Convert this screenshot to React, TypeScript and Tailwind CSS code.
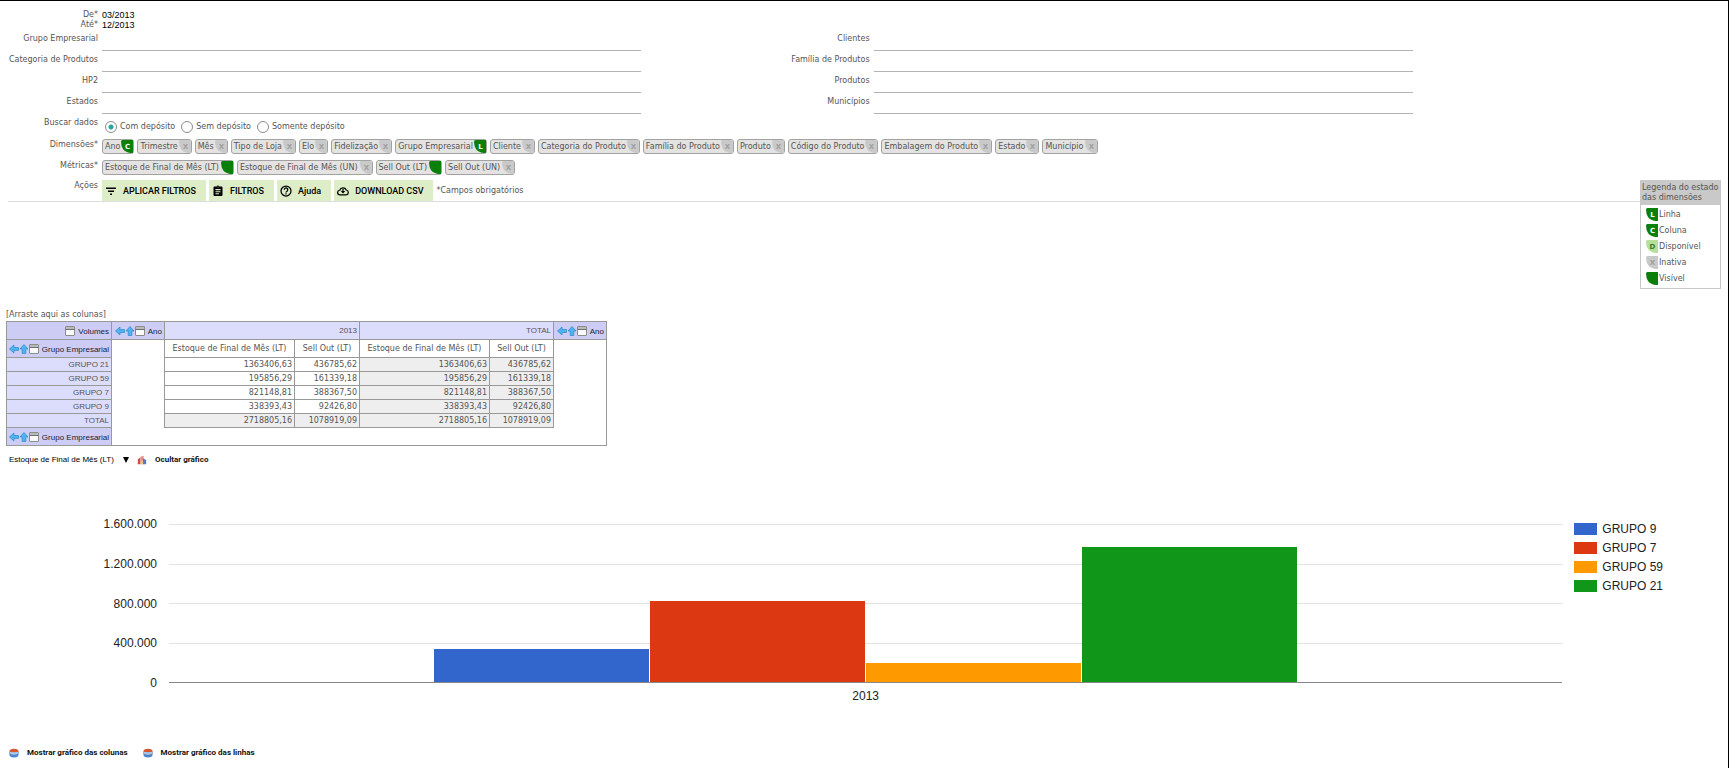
import React, { useState } from 'react';

type TagState = 'linha' | 'coluna' | 'disponivel' | 'inativa' | 'visivel';

interface Tag {
  label: string;
  state: TagState;
}

const DIMENSIONS: Tag[] = [
  { label: 'Ano', state: 'coluna' },
  { label: 'Trimestre', state: 'inativa' },
  { label: 'Mês', state: 'inativa' },
  { label: 'Tipo de Loja', state: 'inativa' },
  { label: 'Elo', state: 'inativa' },
  { label: 'Fidelização', state: 'inativa' },
  { label: 'Grupo Empresarial', state: 'linha' },
  { label: 'Cliente', state: 'inativa' },
  { label: 'Categoria do Produto', state: 'inativa' },
  { label: 'Família do Produto', state: 'inativa' },
  { label: 'Produto', state: 'inativa' },
  { label: 'Código do Produto', state: 'inativa' },
  { label: 'Embalagem do Produto', state: 'inativa' },
  { label: 'Estado', state: 'inativa' },
  { label: 'Município', state: 'inativa' },
];

const METRICS: Tag[] = [
  { label: 'Estoque de Final de Mês (LT)', state: 'visivel' },
  { label: 'Estoque de Final de Mês (UN)', state: 'inativa' },
  { label: 'Sell Out (LT)', state: 'visivel' },
  { label: 'Sell Out (UN)', state: 'inativa' },
];

const LEGEND: Tag[] = [
  { label: 'Linha', state: 'linha' },
  { label: 'Coluna', state: 'coluna' },
  { label: 'Disponível', state: 'disponivel' },
  { label: 'Inativa', state: 'inativa' },
  { label: 'Visível', state: 'visivel' },
];

const FIELDS = [
  ['Grupo Empresarial', 'Clientes'],
  ['Categoria de Produtos', 'Família de Produtos'],
  ['HP2', 'Produtos'],
  ['Estados', 'Municípios'],
];

const DEPOSITS = ['Com depósito', 'Sem depósito', 'Somente depósito'];

const ROWS = [
  { name: 'GRUPO 21', stock: '1363406,63', sell: '436785,62' },
  { name: 'GRUPO 59', stock: '195856,29', sell: '161339,18' },
  { name: 'GRUPO 7', stock: '821148,81', sell: '388367,50' },
  { name: 'GRUPO 9', stock: '338393,43', sell: '92426,80' },
  { name: 'TOTAL', stock: '2718805,16', sell: '1078919,09' },
];

const CHART_MAX = 1600000;
const TICKS = ['1.600.000', '1.200.000', '800.000', '400.000', '0'];
const SERIES = [
  { name: 'GRUPO 9', value: 338393.43, color: 'bg-[#3366cc]' },
  { name: 'GRUPO 7', value: 821148.81, color: 'bg-[#dc3912]' },
  { name: 'GRUPO 59', value: 195856.29, color: 'bg-[#ff9900]' },
  { name: 'GRUPO 21', value: 1363406.63, color: 'bg-[#109618]' },
];

const STATE_STYLE: Record<TagState, { bg: string; fg: string; letter: string }> = {
  linha: { bg: 'fill-[#0a800a]', fg: 'fill-white', letter: 'L' },
  coluna: { bg: 'fill-[#0a800a]', fg: 'fill-white', letter: 'C' },
  disponivel: { bg: 'fill-[#b4e09a]', fg: 'fill-[#3c7a2c]', letter: 'D' },
  inativa: { bg: 'fill-[#c9c9c9]', fg: 'fill-[#a0a0a0]', letter: 'X' },
  visivel: { bg: 'fill-[#0a800a]', fg: 'fill-white', letter: '' },
};

const StateIcon: React.FC<{ state: TagState }> = ({ state }) => {
  const s = STATE_STYLE[state];
  return (
    <svg viewBox="0 0 12 13" className="h-[13px] w-3 shrink-0">
      <path d="M0 1.500 Q0 0 1.500 0 H12 V13 H9.500 Q4 12 2 9 Q0 6 0 1.500 Z" className={s.bg} />
      <text x="6.5" y="8.5" textAnchor="middle" className={`${s.fg} font-['DejaVu_Sans'] text-[7px] font-bold`}>
        {s.letter}
      </text>
    </svg>
  );
};

const TagList: React.FC<{ tags: Tag[]; gap?: string }> = ({ tags, gap = 'gap-px' }) => (
  <div className="flex flex-wrap gap-[3px] pt-[2px]">
    {tags.map((tag) => (
      <button
        key={tag.label}
        type="button"
        className={`flex h-[15px] items-center rounded-[3px] border border-[#a2a2a2] bg-[#e4e3e1] pl-[2px] whitespace-nowrap ${gap}`}
      >
        {tag.label}
        <StateIcon state={tag.state} />
      </button>
    ))}
  </div>
);

const ArrowLeft = () => (
  <svg viewBox="0 0 10 10" className="size-[10px]">
    <path d="M0.5 5 L5 1 V3.5 H9.5 V6.5 H5 V9 Z" fill="#4fb4ee" stroke="#2b86cf" strokeWidth="0.7" />
  </svg>
);

const ArrowUp = () => (
  <svg viewBox="0 0 10 10" className="size-[10px]">
    <path d="M5 0.5 L9 5 H6.8 V9.5 H3.2 V5 H1 Z" fill="#4fb4ee" stroke="#2b86cf" strokeWidth="0.7" />
  </svg>
);

const WindowIcon = () => (
  <svg viewBox="0 0 10 10" className="size-[10px]">
    <rect x="0.5" y="0.5" width="9" height="9" rx="0.5" fill="#fafafa" stroke="#8b8b8b" />
    <rect x="1" y="1" width="8" height="2" fill="#b9b9b9" />
    <path d="M0.5 3.5 H9.5" stroke="#6f6f6f" />
  </svg>
);

const AxisHead: React.FC<{ label: string; arrows?: boolean }> = ({ label, arrows = true }) => (
  <span className="flex items-center justify-end font-['Liberation_Sans'] font-normal whitespace-nowrap text-[#223]">
    {arrows && <ArrowLeft />}
    {arrows && <ArrowUp />}
    <WindowIcon />
    <span className="pt-[3px] pl-[3px]">{label}</span>
  </span>
);

const FilterIcon = () => (
  <svg viewBox="0 0 24 24" className="size-3">
    <path d="M2 5h20v3H2zM6 11h12v3H6zM10 17h4v3h-4z" />
  </svg>
);

const ClipboardIcon = () => (
  <svg viewBox="0 0 24 24" className="size-3">
    <path d="M19 3h-4.2a3 3 0 0 0-5.6 0H5a2 2 0 0 0-2 2v15a2 2 0 0 0 2 2h14a2 2 0 0 0 2-2V5a2 2 0 0 0-2-2zm-7 0a1 1 0 1 1 0 2 1 1 0 0 1 0-2zM7 8h10v2.500H7zm0 4.500h10v2H7zM7 16.500h7v2H7z" fillRule="evenodd" />
  </svg>
);

const HelpIcon = () => (
  <svg viewBox="0 0 24 24" className="size-3" fill="none" stroke="currentColor" strokeWidth="2.500">
    <circle cx="12" cy="12" r="10" />
    <path d="M8.500 9.500a3.500 3.500 0 1 1 5.500 2.800c-1.400 1-2 1.500-2 2.700M12 16.500v2.500" />
  </svg>
);

const CloudIcon = () => (
  <svg viewBox="0 0 24 24" className="size-3" fill="none" stroke="currentColor" strokeWidth="2.500">
    <path d="M6 19.500a4.500 4.500 0 0 1-.5-9 7 7 0 0 1 13-.5 4.800 4.800 0 0 1 0 9.500z" />
    <path d="M12 8v7" />
    <path d="M7.500 12h9L12 17z" fill="currentColor" stroke="none" />
  </svg>
);

const ActionButton: React.FC<{ icon: React.ReactNode; children: React.ReactNode }> = ({ icon, children }) => (
  <button
    type="button"
    className="flex h-[21px] items-center gap-[6px] bg-[#dcedc8] pr-[10px] pl-[3px] font-['Roboto'] text-[9px] font-medium text-black"
  >
    {icon}
    {children}
  </button>
);

const BarsIcon = () => (
  <svg viewBox="0 0 12 12" className="size-[10px]">
    <path d="M1 11 V5 L4 3 V11 Z" fill="#c9504a" />
    <path d="M4 11 V2 L8 1 V11 Z" fill="#e98f86" />
    <path d="M7 11 V4 L11 6 V11 Z" fill="#5b78c4" />
    <path d="M5 11 V7 H7 V11 Z" fill="#f4d06a" />
  </svg>
);

const PieIcon = () => (
  <svg viewBox="0 0 12 12" className="size-[10px]">
    <path d="M0.500 4.500 V7.500 A5.500 4 0 0 0 11.500 7.500 V4.500 Z" fill="#4a86cf" />
    <ellipse cx="6" cy="4.500" rx="5.500" ry="3.500" fill="#d9552b" />
    <path d="M0.500 4.500 L6 5 L11.500 4.500 A5.500 3.500 0 0 1 0.500 4.500 Z" fill="#9fcbf0" />
  </svg>
);

const LinkButton: React.FC<{ icon: React.ReactNode; children: React.ReactNode }> = ({ icon, children }) => (
  <button type="button" className="flex items-center gap-2 font-['Roboto'] text-[8px] font-bold text-[#111]">
    {icon}
    {children}
  </button>
);

const FilterForm = () => {
  const [deposit, setDeposit] = useState(DEPOSITS[0]);
  const [from, setFrom] = useState('03/2013');
  const [to, setTo] = useState('12/2013');

  return (
    <form className="relative mr-[7px] ml-2 border-b border-[#dcdcdc] pt-[9px]" onSubmit={(e) => e.preventDefault()}>
      <div className="grid grid-cols-[90px_1fr] gap-x-1 leading-[10px]">
        <label htmlFor="from" className="text-right">De*</label>
        <input id="from" value={from} onChange={(e) => setFrom(e.target.value)} className="h-[10px] w-20 font-['Liberation_Sans'] text-[9px] text-black outline-none" />
        <label htmlFor="to" className="text-right">Até*</label>
        <input id="to" value={to} onChange={(e) => setTo(e.target.value)} className="h-[10px] w-20 font-['Liberation_Sans'] text-[9px] text-black outline-none" />
      </div>
      {FIELDS.map((pair) => (
        <div key={pair[0]} className="grid h-[21px] grid-cols-[90px_108fr_45fr_108fr_61fr] gap-x-1 leading-[18px]">
          {pair.map((name) => (
            <React.Fragment key={name}>
              <label htmlFor={name} className="text-right">{name}</label>
              <input id={name} className="h-[21px] w-full border-b border-[#b4b4b4] outline-none" />
            </React.Fragment>
          ))}
        </div>
      ))}
      <div role="radiogroup" aria-label="Buscar dados" className="grid h-[23px] grid-cols-[90px_1fr] gap-x-1 leading-[18px]">
        <span className="text-right">Buscar dados</span>
        <div className="flex items-center gap-[6px] pt-[2px] pl-[3px]">
          {DEPOSITS.map((name) => (
            <label key={name} className="flex items-center gap-[3px]">
              <input
                type="radio"
                name="deposit"
                checked={deposit === name}
                onChange={() => setDeposit(name)}
                className="size-3 appearance-none rounded-full border border-[#8c8c8c] bg-white checked:bg-[radial-gradient(circle,#26a69a_0_2px,white_3px)]"
              />
              {name}
            </label>
          ))}
        </div>
      </div>
      <div className="grid min-h-[21px] grid-cols-[90px_1fr] gap-x-1 leading-4">
        <span className="text-right">Dimensões*</span>
        <TagList tags={DIMENSIONS} />
      </div>
      <div className="grid min-h-[21px] grid-cols-[90px_1fr] gap-x-1 leading-4">
        <span className="text-right">Métricas*</span>
        <TagList tags={METRICS} gap="gap-[2px]" />
      </div>
      <div className="grid grid-cols-[90px_1fr] gap-x-1 pt-px leading-3">
        <span className="text-right">Ações</span>
        <div className="flex items-center gap-[3px]">
          <ActionButton icon={<FilterIcon />}>APLICAR FILTROS</ActionButton>
          <ActionButton icon={<ClipboardIcon />}>FILTROS</ActionButton>
          <ActionButton icon={<HelpIcon />}>Ajuda</ActionButton>
          <ActionButton icon={<CloudIcon />}>DOWNLOAD CSV</ActionButton>
          <span>*Campos obrigatórios</span>
        </div>
      </div>
      {/* state legend floats over the divider */}
      <aside className="absolute top-[179px] right-0 w-[81px] border border-[#c8c8c8] bg-white">
        <h2 className="bg-[#c9c9c9] py-[2px] pl-px leading-[10px] whitespace-nowrap">
          Legenda do estado
          <br />
          das dimensões
        </h2>
        <ul className="flex flex-col gap-[3px] py-[3px] pl-[5px]">
          {LEGEND.map((item) => (
            <li key={item.label} className="flex items-center gap-px leading-[13px]">
              <StateIcon state={item.state} />
              {item.label}
            </li>
          ))}
        </ul>
      </aside>
    </form>
  );
};

const PivotTable = () => {
  const cell = 'border border-[#999] px-[2px]';
  const head = 'border border-[#999] bg-[#dcdcfc] px-[2px]';
  const axis = 'border border-[#999] bg-[#ccccf5] px-[2px]';
  return (
    <table className="w-[601px] table-fixed border-collapse border border-[#999] text-right leading-3">
      <colgroup>
        <col className="w-[105px]" />
        <col className="w-[53px]" />
        <col className="w-[130px]" />
        <col className="w-[65px]" />
        <col className="w-[130px]" />
        <col className="w-16" />
        <col />
      </colgroup>
      <tbody>
        <tr className="h-[18px]">
          <th className={axis}><AxisHead label="Volumes" arrows={false} /></th>
          <th className={axis}><AxisHead label="Ano" /></th>
          <th className={`${head} font-['Liberation_Sans'] font-normal`} colSpan={2}>2013</th>
          <th className={`${head} font-['Liberation_Sans'] font-normal`} colSpan={2}>TOTAL</th>
          <th className={axis}><AxisHead label="Ano" /></th>
        </tr>
        <tr className="h-[18px]">
          <th className={axis}><AxisHead label="Grupo Empresarial" /></th>
          <td rowSpan={7} />
          <td className={`${cell} text-center`}>Estoque de Final de Mês (LT)</td>
          <td className={`${cell} text-center`}>Sell Out (LT)</td>
          <td className={`${cell} text-center`}>Estoque de Final de Mês (LT)</td>
          <td className={`${cell} text-center`}>Sell Out (LT)</td>
          <td rowSpan={7} />
        </tr>
        {ROWS.map((row) => {
          const own = row.name === 'TOTAL' ? 'bg-[#eeeeee]' : 'bg-white';
          return (
            <tr key={row.name} className="h-[14px]">
              <th className={`${head} font-['Liberation_Sans'] font-normal`}>{row.name}</th>
              <td className={`${cell} ${own}`}>{row.stock}</td>
              <td className={`${cell} ${own}`}>{row.sell}</td>
              <td className={`${cell} bg-[#eeeeee]`}>{row.stock}</td>
              <td className={`${cell} bg-[#eeeeee]`}>{row.sell}</td>
            </tr>
          );
        })}
        <tr className="h-[18px]">
          <th className={axis}><AxisHead label="Grupo Empresarial" /></th>
          <td colSpan={4} />
        </tr>
      </tbody>
    </table>
  );
};

const BarChart = () => (
  <section className="flex pt-[43px] pr-[65px] pl-[97px] font-['Liberation_Sans'] text-xs leading-4 text-[#222]">
    <div className="flex h-[175px] w-[60px] flex-col justify-between text-right">
      {TICKS.map((tick) => (
        <span key={tick}>{tick}</span>
      ))}
    </div>
    <div className="ml-3 flex-1 pt-2">
      <div className="relative h-[159px]">
        <div className="flex h-full flex-col justify-between">
          {TICKS.map((tick) => (
            <div key={tick} className={tick === '0' ? 'h-px bg-[#888]' : 'h-px bg-[#e2e2e2]'} />
          ))}
        </div>
        <div className="absolute inset-x-0 top-0 bottom-px flex items-end justify-center">
          {SERIES.map((s) => (
            <div key={s.name} className="flex h-full w-[15.5%] items-end pr-px">
              <div className={`w-full ${s.color}`} style={{ height: `${(s.value / CHART_MAX) * 100}%` }} />
            </div>
          ))}
        </div>
      </div>
      <p className="pt-[5px] text-center">2013</p>
    </div>
    <ul className="ml-3 flex flex-col gap-[3px] pt-[5px]">
      {SERIES.map((s) => (
        <li key={s.name} className="flex items-center gap-[5px] whitespace-nowrap">
          <span className={`h-3 w-[23px] ${s.color}`} />
          {s.name}
        </li>
      ))}
    </ul>
  </section>
);

export default function App() {
  return (
    <div className="min-h-screen border-t border-r border-black bg-white font-['DejaVu_Sans',sans-serif] text-[8px] text-[#555]">
      <FilterForm />
      <main className="pt-[107px]">
        <div className="pl-[6px]">
          <p className="pb-px leading-[11px]">[Arraste aqui as colunas]</p>
          <PivotTable />
        </div>
        <div className="flex h-[27px] items-center gap-2 pl-[9px]">
          <div className="relative flex items-center">
            <select
              aria-label="Métrica do gráfico"
              className="w-[120px] appearance-none font-['Liberation_Sans'] text-[8px] leading-3 text-black outline-none"
            >
              <option>Estoque de Final de Mês (LT)</option>
              <option>Sell Out (LT)</option>
            </select>
            <svg viewBox="0 0 6 6" className="pointer-events-none absolute right-0 size-[6px]">
              <path d="M0 0 H6 L3 6 Z" />
            </svg>
          </div>
          <LinkButton icon={<BarsIcon />}>Ocultar gráfico</LinkButton>
        </div>
        <BarChart />
      </main>
      <footer className="flex gap-[15px] px-[9px] pt-[43px] leading-3">
        <LinkButton icon={<PieIcon />}>Mostrar gráfico das colunas</LinkButton>
        <LinkButton icon={<PieIcon />}>Mostrar gráfico das linhas</LinkButton>
      </footer>
    </div>
  );
}
